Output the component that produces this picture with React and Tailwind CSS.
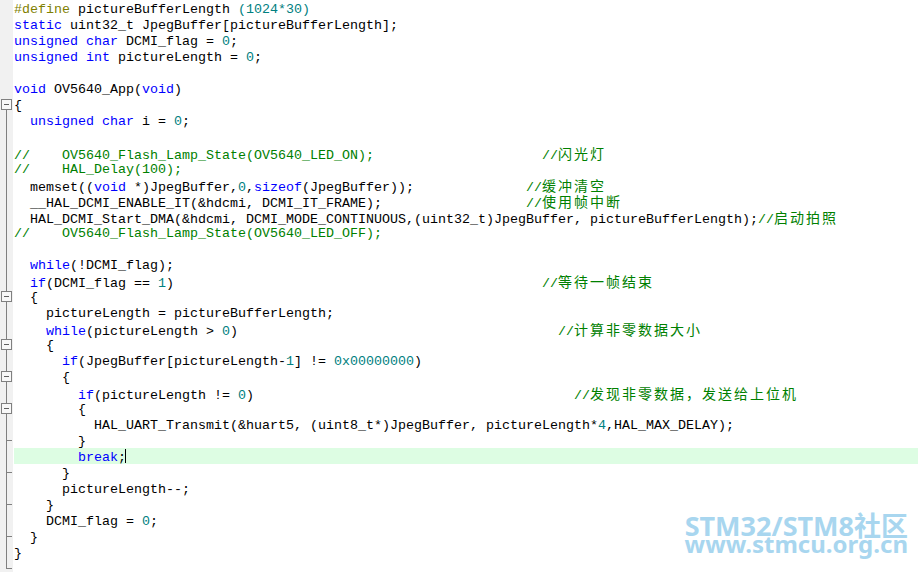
import React from 'react';

const KEYWORDS = ['void', 'static', 'unsigned', 'char', 'int', 'while', 'if', 'break', 'sizeof'];

// source lines, padded with spaces so comments land on the right columns
const pad = (s, col) => s + ' '.repeat(Math.max(0, col - s.length));

const LINES = [
  '#define pictureBufferLength (1024*30)',
  'static uint32_t JpegBuffer[pictureBufferLength];',
  'unsigned char DCMI_flag = 0;',
  'unsigned int pictureLength = 0;',
  '',
  'void OV5640_App(void)',
  '{',
  '  unsigned char i = 0;',
  '',
  pad('//    OV5640_Flash_Lamp_State(OV5640_LED_ON);', 66) + '//闪光灯',
  '//    HAL_Delay(100);',
  pad('  memset((void *)JpegBuffer,0,sizeof(JpegBuffer));', 64) + '//缓冲清空',
  pad('  __HAL_DCMI_ENABLE_IT(&hdcmi, DCMI_IT_FRAME);', 64) + '//使用帧中断',
  '  HAL_DCMI_Start_DMA(&hdcmi, DCMI_MODE_CONTINUOUS,(uint32_t)JpegBuffer, pictureBufferLength);//启动拍照',
  '//    OV5640_Flash_Lamp_State(OV5640_LED_OFF);',
  '',
  '  while(!DCMI_flag);',
  pad('  if(DCMI_flag == 1)', 66) + '//等待一帧结束',
  '  {',
  '    pictureLength = pictureBufferLength;',
  pad('    while(pictureLength > 0)', 68) + '//计算非零数据大小',
  '    {',
  '      if(JpegBuffer[pictureLength-1] != 0x00000000)',
  '      {',
  pad('        if(pictureLength != 0)', 70) + '//发现非零数据，发送给上位机',
  '        {',
  '          HAL_UART_Transmit(&huart5, (uint8_t*)JpegBuffer, pictureLength*4,HAL_MAX_DELAY);',
  '        }',
  '        break;',
  '      }',
  '      pictureLength--;',
  '    }',
  '    DCMI_flag = 0;',
  '  }',
  '}',
  '',
];

const FOLD_OPEN = [6, 18, 21, 23, 25];
const FOLD_END = [27, 29, 31, 33, 35];
const CURRENT = 28;

// comment text: CJK runs get a double-width cell like the editor draws them
const Comment = ({ text }) => {
  const parts = text.split(/([\u3000-\u9fff\uff00-\uffef]+)/);
  return (
    <span className="text-[#008000]">
      {parts.map((p, i) =>
        /[\u3000-\u9fff\uff00-\uffef]/.test(p) ? (
          <span key={i} className="text-[14px] tracking-[2px] font-['Noto_Sans_CJK_SC',sans-serif]">
            {p}
          </span>
        ) : (
          <span key={i}>{p}</span>
        )
      )}
    </span>
  );
};

const CodeLine = ({ src }) => {
  if (src.startsWith('#define')) {
    return (
      <>
        <span className="text-[#808000]">#define</span>
        <span> pictureBufferLength </span>
        <span className="text-[#008080]">(1024*30)</span>
      </>
    );
  }
  const ci = src.indexOf('//');
  const code = ci >= 0 ? src.slice(0, ci) : src;
  const comment = ci >= 0 ? src.slice(ci) : '';
  const tokens = code.split(/(\b0x[0-9A-Fa-f]+\b|\b[A-Za-z_]\w*\b|\b\d+\b)/);
  return (
    <>
      {tokens.map((t, i) => {
        if (KEYWORDS.includes(t)) return <span key={i} className="text-[#0000ff]">{t}</span>;
        if (/^(0x[0-9A-Fa-f]+|\d+)$/.test(t)) return <span key={i} className="text-[#008080]">{t}</span>;
        return <span key={i}>{t}</span>;
      })}
      {comment && <Comment text={comment} />}
    </>
  );
};

const Gutter = ({ idx }) => {
  const open = FOLD_OPEN.includes(idx);
  const end = FOLD_END.includes(idx);
  const inside = idx > 6 && idx < 35;
  return (
    <div className="relative h-4 w-[13px] shrink-0 bg-[#f1f1f1]">
      {open && idx !== 6 && <div className="absolute left-[6px] top-0 h-4 w-px bg-[#808080]" />}
      {idx === 6 && <div className="absolute left-[6px] top-[13px] h-[3px] w-px bg-[#808080]" />}
      {inside && !open && <div className="absolute left-[6px] top-0 h-4 w-px bg-[#808080]" />}
      {idx === 35 && <div className="absolute left-[6px] top-0 h-2 w-px bg-[#808080]" />}
      {end && <div className="absolute left-[6px] top-[8px] h-px w-[6px] bg-[#808080]" />}
      {open && (
        <div className="absolute left-px top-[3px] flex h-[11px] w-[11px] items-center justify-center border border-[#808080] bg-[#f8f8f8]">
          <div className="h-px w-[5px] bg-[#606060]" />
        </div>
      )}
    </div>
  );
};

export default function App() {
  return (
    <div className="relative h-[572px] w-[918px] overflow-hidden bg-white">
      <div className="flex flex-col font-['Liberation_Mono','Courier_New',monospace] text-[13.333px] text-black">
        {LINES.map((src, i) => (
          <div key={i} className="flex h-4">
            <Gutter idx={i} />
            <div
              className={
                'relative ml-px h-4 flex-1 whitespace-pre leading-[19px] ' +
                (i === CURRENT ? 'bg-[#ddfde3]' : '')
              }
            >
              <CodeLine src={src} />
              {i === CURRENT && <span className="absolute left-[111px] top-px h-[14px] w-px bg-black" />}
            </div>
          </div>
        ))}
      </div>

      {/* forum watermark */}
      <div className="absolute bottom-[20px] right-[10px] flex flex-col items-end font-['Noto_Sans','Noto_Sans_CJK_SC',sans-serif] font-bold text-[#a8d6ef]">
        <span className="text-[27px] leading-[20px]">STM32/STM8社区</span>
        <span className="text-[24px] leading-[16px]">www.stmcu.org.cn</span>
      </div>
    </div>
  );
}
